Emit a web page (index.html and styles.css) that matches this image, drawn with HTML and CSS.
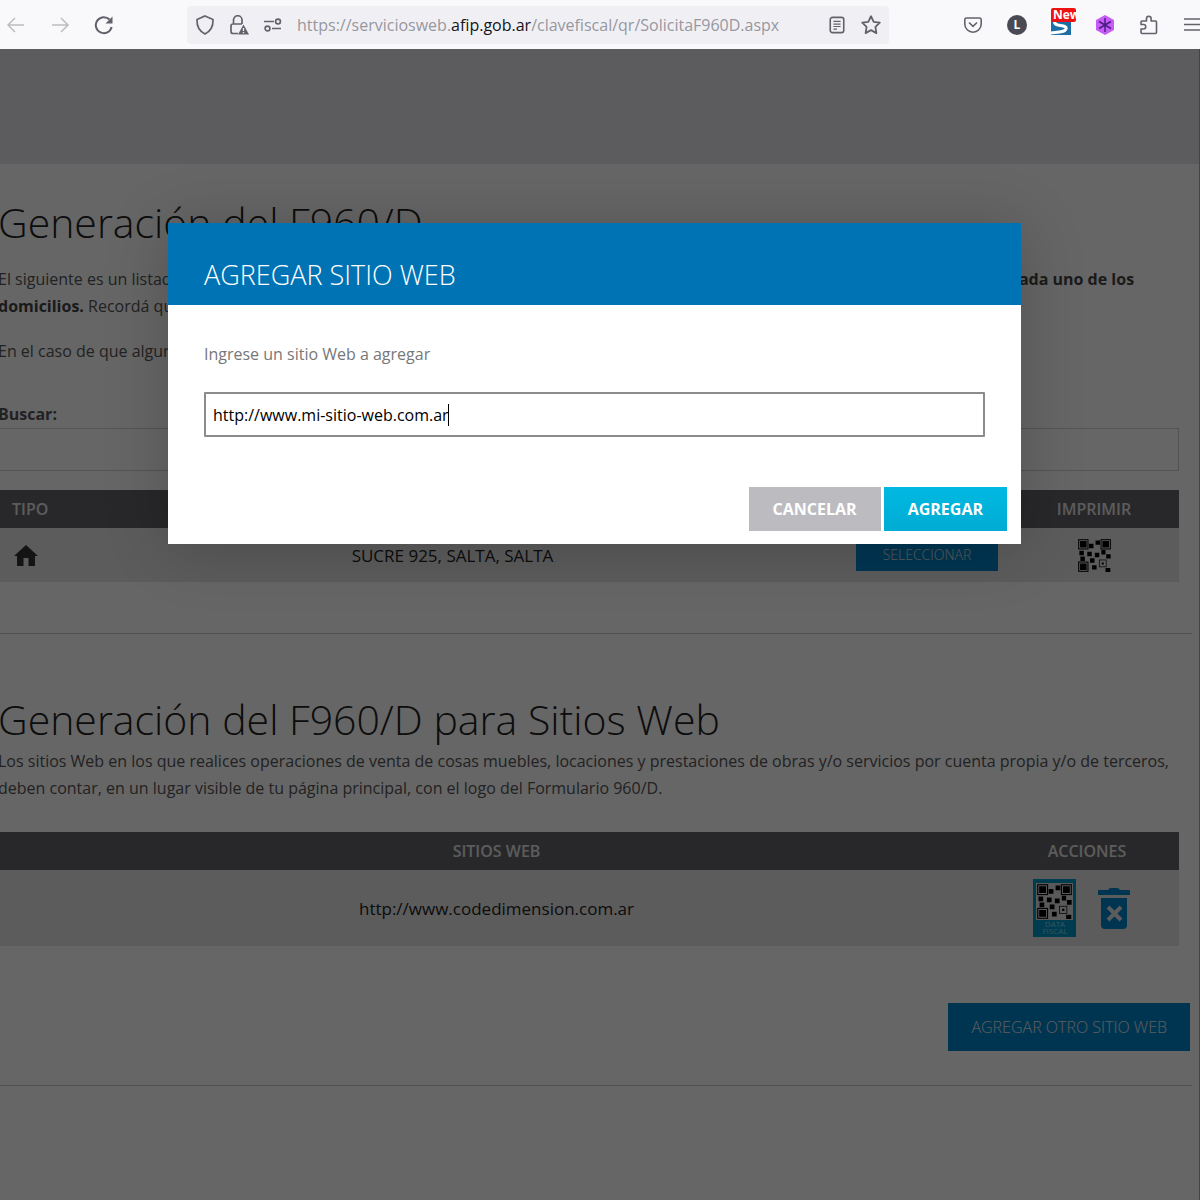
FILE: index.html
```html
<!DOCTYPE html>
<html lang="es">
<head>
<meta charset="utf-8">
<meta name="viewport" content="width=device-width, initial-scale=1">
<title>Generación del F960/D</title>
<link rel="stylesheet" href="styles.css">
</head>
<body>
<svg class="defs" aria-hidden="true">
  <symbol id="qr" viewBox="0 0 96 96">
    <g fill="none" stroke="currentColor" stroke-width="3">
      <rect x="2" y="2" width="27" height="27"/>
      <rect x="67" y="2" width="27" height="27"/>
      <rect x="2" y="67" width="27" height="27"/>
      <rect x="62" y="61" width="20" height="20" stroke-width="2"/>
    </g>
    <path fill="currentColor" d="M6 6h19v19H6zM71 6h19v19H71zM6 71h19v19H6zM69 68h6v6h-6zM32 14h13v13H32zM51 4h13v13H51zM4 34h13v13H4zM27 37h13v13H27zM49 40h13v13H49zM68 32h12v13H68zM82 44h13v13H82zM7 51h13v13H7zM35 56h13v13H35zM41 76h13v13H41zM80 84h14v12H80z"/>
  </symbol>
</svg>

<header class="toolbar">
  <nav class="nav-buttons" aria-label="Navegación">
    <button type="button" class="tool faded" aria-label="Atrás"><svg viewBox="0 0 20 20"><path d="M18 10H2M9 3l-7 7 7 7"/></svg></button>
    <button type="button" class="tool faded" aria-label="Adelante"><svg viewBox="0 0 20 20"><path d="M2 10h16M11 3l7 7-7 7"/></svg></button>
    <button type="button" class="tool" aria-label="Recargar"><svg viewBox="0 0 20 20"><path stroke-width="2" d="M17.600 12A8 8 0 1 1 15.500 4.500"/><path class="solid" d="M18.500 1.500v7h-7z"/></svg></button>
  </nav>
  <div class="address">
    <button type="button" class="tool" aria-label="Protección"><svg viewBox="0 0 20 20"><path stroke-width="1.700" d="M10 1l8 3.500C18.300 11 16 16 10 19 4 16 1.700 11 2 4.500z"/></svg></button>
    <button type="button" class="tool" aria-label="Información del sitio"><svg viewBox="0 0 20 20"><path stroke-width="1.700" d="M9 18.500H4a2 2 0 0 1-2-2V11a2 2 0 0 1 2-2h9M4.500 9V5a4 4 0 0 1 8.500 0v4"/><path class="solid" d="M14.500 9.500L20 19.500H9z"/><path stroke="#f0f0f4" stroke-width="1.300" d="M14.500 13v3M14.500 17v1.200"/></svg></button>
    <button type="button" class="tool" aria-label="Permisos"><svg viewBox="0 0 20 20"><path stroke-width="1.700" d="M1 6.500h10M9 13.500h9"/><circle cx="15" cy="6.500" r="2.400" stroke-width="1.700"/><circle cx="4.500" cy="13.500" r="2.400" stroke-width="1.700"/></svg></button>
    <span class="url">https://serviciosweb.<b>afip.gob.ar</b>/clavefiscal/qr/SolicitaF960D.aspx</span>
    <button type="button" class="tool" aria-label="Vista de lectura"><svg class="reader" viewBox="0 0 20 20"><rect x="2.500" y="1.500" width="15" height="17" rx="2.500" stroke-width="1.800"/><path stroke-width="1.300" d="M6 6h8M6 9h8M6 11.700h8M6 14.500h4"/></svg></button>
    <button type="button" class="tool" aria-label="Marcador"><svg viewBox="0 0 20 20"><path stroke-width="1.800" stroke-linejoin="round" d="M10 1.200l2.700 5.600 6.100.8-4.400 4.300 1 6.200-5.400-3-5.400 3 1-6.200L1.200 7.600l6.100-.8z"/></svg></button>
  </div>
  <div class="extensions">
    <button type="button" class="tool" aria-label="Pocket"><svg viewBox="0 0 20 20"><path stroke-width="1.600" d="M3.500 3h13A1.700 1.700 0 0 1 18.200 4.700V9a8.200 8.200 0 0 1-16.400 0V4.700A1.700 1.700 0 0 1 3.500 3zM6 7.500l4 3.800 4-3.800"/></svg></button>
    <button type="button" class="tool avatar" aria-label="Cuenta">L</button>
    <button type="button" class="tool snap" aria-label="Captura"><svg viewBox="0 0 20 20"><path fill="#1c6ea4" stroke="none" d="M0 0h20v20H0z"/><path stroke="#fff" stroke-width="3" d="M20 5H7c-5 1-4 4 0 5 5 1 9 1 8 4-1 3-7 3-15 4"/></svg><span class="badge">New</span></button>
    <button type="button" class="tool" aria-label="Extensión"><svg viewBox="0 0 20 20"><path fill="#c65cf5" stroke="none" d="M10 0l9 5v10l-9 5-9-5V5z"/><path stroke="#4b1d86" stroke-width="1.500" d="M10 3v14M4 6.500l12 7M16 6.500l-12 7"/></svg></button>
    <button type="button" class="tool" aria-label="Complementos"><svg viewBox="0 0 20 20"><path stroke-width="1.600" stroke-linejoin="round" d="M3 18.500q-1 0-1-1V14h2.500a2.200 2.200 0 0 0 0-4.500H2V7q0-1 1-1h4.500V3.500a2.300 2.300 0 0 1 4.600 0V6H16.500q1 0 1 1v10.500q0 1-1 1z"/></svg></button>
    <button type="button" class="tool" aria-label="Menú"><svg viewBox="0 0 20 20"><path stroke-width="1.600" d="M1 4h18M1 9.500h18M1 15h18"/></svg></button>
  </div>
</header>

<div class="viewport">
  <div class="banner"></div>
  <main class="page">
    <section class="block">
      <h1>Generación del F960/D</h1>
      <p class="intro">El siguiente es un listado de los domicilios que tenés registrados. Deberás imprimir el Formulario 960/D y exhibirlo siempre a la vista <b>en cada uno de los domicilios.</b> Recordá que debe estar en un lugar visible.</p>
      <p>En el caso de que alguno de los domicilios no figure, deberás actualizar tus datos.</p>
      <label for="buscar">Buscar:</label>
      <input id="buscar" class="search" type="text">
      <table class="places">
        <thead><tr><th class="kind">TIPO</th><th></th><th class="pick"></th><th class="print">IMPRIMIR</th></tr></thead>
        <tbody><tr>
          <td class="kind"><svg class="home" viewBox="0 0 24 21" role="img" aria-label="Domicilio"><path d="M12 0L0 11h3v10h6.500v-8h5v8H21V11h3z"/></svg></td>
          <td>SUCRE 925, SALTA, SALTA</td>
          <td><button type="button" class="primary small">SELECCIONAR</button></td>
          <td><button type="button" class="bare" aria-label="Imprimir"><svg class="qr"><use href="#qr"/></svg></button></td>
        </tr></tbody>
      </table>
    </section>
    <section class="block sites">
      <h2>Generación del F960/D para Sitios Web</h2>
      <p>Los sitios Web en los que realices operaciones de venta de cosas muebles, locaciones y prestaciones de obras y/o servicios por cuenta propia y/o de terceros, deben contar, en un lugar visible de tu página principal, con el logo del Formulario 960/D.</p>
      <table class="webs">
        <thead><tr><th>SITIOS WEB</th><th class="actions">ACCIONES</th></tr></thead>
        <tbody><tr>
          <td>http://www.codedimension.com.ar</td>
          <td><div class="icons">
            <button type="button" class="bare" aria-label="Data Fiscal"><svg class="fiscal" viewBox="0 0 43 58"><path fill="#0096c8" d="M0 0h43v58H0z"/><path fill="#e0e0e0" d="M3 4h37v37H3z"/><svg x="4" y="5" width="35" height="35" color="#000"><use href="#qr"/></svg><text x="22" y="48">DATA</text><text x="22" y="55">FISCAL</text></svg></button>
            <button type="button" class="bare" aria-label="Eliminar"><svg class="trash" viewBox="0 0 32 41"><path fill="#0084cc" d="M1 2h9q1-2 3-2h6q2 0 3 2h9q1 0 1 1v4H0V3q0-1 1-1zM3 10h26v27a4 4 0 0 1-4 4H7a4 4 0 0 1-4-4z"/><path stroke="#e6e6e6" stroke-width="4" d="M10 19l13 13M23 19L10 32"/></svg></button>
          </div></td>
        </tr></tbody>
      </table>
      <div class="more"><button type="button" class="primary">AGREGAR OTRO SITIO WEB</button></div>
    </section>
  </main>

  <div class="overlay">
    <form class="modal" role="dialog" aria-labelledby="modal-title">
      <h2 id="modal-title">AGREGAR SITIO WEB</h2>
      <div class="modal-body">
        <label for="sitio">Ingrese un sitio Web a agregar</label>
        <div class="field">
          <input id="sitio" type="text" value="http://www.mi-sitio-web.com.ar">
          <span class="caret"></span>
        </div>
      </div>
      <div class="modal-actions">
        <button type="button" class="cancel">CANCELAR</button>
        <button type="button" class="accept">AGREGAR</button>
      </div>
    </form>
  </div>
</div>
</body>
</html>
```
FILE: styles.css
```css
* {
  box-sizing: border-box;
}

body {
  margin: 0;
  min-height: 100vh;
  display: flex;
  flex-direction: column;
  overflow-x: hidden;
  background: #fff;
  color: #555;
  font: 16px/27px "Open Sans", "Noto Sans", sans-serif;
}

h1, h2, p {
  margin: 0;
}

button, input {
  font: inherit;
}

.defs {
  position: absolute;
  width: 0;
  height: 0;
}

/* Browser toolbar */
.toolbar {
  display: flex;
  align-items: center;
  height: 49px;
  background: #f9f9fb;
  overflow: hidden;
}

.tool {
  flex: none;
  display: flex;
  align-items: center;
  justify-content: center;
  width: 20px;
  height: 20px;
  padding: 0;
  border: 0;
  background: none;
  color: #62626b;
}

.tool svg {
  width: 20px;
  height: 20px;
  fill: none;
  stroke: currentColor;
  stroke-width: 1.5;
}

.tool .reader {
  width: 18px;
  height: 18px;
}

.tool .solid {
  fill: currentColor;
  stroke: none;
}

.faded {
  color: #bdbdc2;
}

.nav-buttons {
  display: flex;
  gap: 24px;
  width: 187px;
  padding-left: 6px;
}

.address {
  display: flex;
  align-items: center;
  gap: 14px;
  flex: 0 1 702px;
  height: 38px;
  padding: 0 8px;
  border-radius: 4px;
  background: #f0f0f4;
}

.url {
  flex: 1;
  padding-top: 2px;
  color: #97979f;
  white-space: nowrap;
}

.url b {
  color: #15141a;
  font-weight: 500;
}

.extensions {
  display: flex;
  flex: none;
  gap: 24px;
  margin-left: auto;
  margin-right: -3px;
}

.avatar {
  border-radius: 50%;
  background: #4a4a55;
  color: #fff;
  font-size: 12px;
  font-weight: 700;
}

.snap {
  position: relative;
}

.badge {
  position: absolute;
  top: -7px;
  left: 0;
  width: 25px;
  height: 14px;
  padding-left: 2px;
  overflow: hidden;
  border-radius: 2px;
  background: #ee1111;
  color: #fff;
  font-size: 12px;
  font-weight: 700;
  line-height: 13px;
}

/* Page under the dialog */
.viewport {
  position: relative;
  flex: 1;
  border-right: 1px solid #444;
  overflow: hidden;
}

.banner {
  height: 115px;
  background: #e6e6eb;
}

.page {
  margin: 0 7px 0 -2px;
}

.block {
  padding: 37px 13px 51px 0;
  border-bottom: 1px solid #ccc;
}

.sites {
  padding: 64px 13px 34px 0;
}

.page h1, .page h2 {
  color: #222;
  font-size: 41px;
  font-weight: 300;
  line-height: 42px;
}

.page h2 {
  margin-bottom: 8px;
}

.intro {
  margin: 23px 0 18px;
}

.intro b {
  color: #444;
}

.page label {
  display: block;
  margin-top: 36px;
  font-weight: 700;
}

.search {
  display: block;
  width: 100%;
  height: 43px;
  margin-bottom: 19px;
  border: 1px solid #d2d2d2;
  background: #fff;
}

table {
  width: 100%;
  border-collapse: collapse;
  table-layout: fixed;
  text-align: center;
}

th {
  height: 38px;
  padding: 0;
  background: #64646a;
  color: #e6e6e6;
  font-weight: 600;
}

td {
  height: 54px;
  padding: 0;
  background: #e6e6e6;
  color: #222;
  font-size: 17px;
}

.kind {
  width: 62px;
  padding-left: 14px;
  text-align: left;
}

.pick {
  width: 164px;
}

.print {
  width: 170px;
}

.home {
  display: block;
  width: 24px;
  height: 21px;
  margin-left: 2px;
  fill: #333;
}

.bare {
  display: inline-block;
  padding: 0;
  border: 0;
  background: none;
  color: #000;
  vertical-align: middle;
}

.bare svg {
  display: block;
}

.qr {
  width: 33px;
  height: 33px;
}

.primary {
  height: 48px;
  padding: 0 23px;
  border: 0;
  background: #0086cc;
  color: #e6e6e6;
  font-weight: 300;
  vertical-align: middle;
}

.small {
  height: 32px;
  padding: 0 27px;
  font-size: 14px;
  line-height: 32px;
}

.webs {
  margin-top: 30px;
}

.webs td {
  height: 76px;
}

.actions {
  width: 184px;
}

.icons {
  display: flex;
  align-items: center;
  justify-content: center;
  gap: 22px;
  padding-right: 12px;
}

.fiscal {
  width: 43px;
  height: 58px;
}

.fiscal text {
  fill: #7cd8f5;
  font-size: 8px;
  text-anchor: middle;
}

.trash {
  width: 32px;
  height: 41px;
}

.more {
  display: flex;
  justify-content: flex-end;
  margin: 57px -11px 0 0;
}

/* Dialog */
.overlay {
  position: absolute;
  inset: 0;
  display: flex;
  align-items: flex-start;
  justify-content: center;
  padding: 174px 10px 0 0;
  background: rgba(0, 0, 0, 0.6);
}

.modal {
  width: 92%;
  max-width: 853px;
  background: #fff;
  box-shadow: 0 4px 60px rgba(0, 0, 0, 0.2);
}

.modal h2 {
  padding: 32px 36px 10px;
  background: #0073b4;
  color: #fff;
  font-size: 27px;
  font-weight: 300;
  line-height: 40px;
}

.modal-body {
  padding: 36px 36px 50px;
}

.modal label {
  display: block;
  margin-bottom: 24px;
  color: #777;
}

.field {
  position: relative;
}

.modal input {
  display: block;
  width: 100%;
  height: 45px;
  padding: 0 7px;
  border: 2px solid #8c8c8c;
  border-radius: 1px;
  outline: 0;
  background: #fff;
  color: #000;
}

.caret {
  position: absolute;
  top: 12px;
  left: 244px;
  width: 1px;
  height: 22px;
  background: #000;
}

.modal-actions {
  display: flex;
  justify-content: flex-end;
  gap: 3px;
  padding: 0 14px 13px;
}

.modal-actions button {
  height: 44px;
  padding: 0 24px;
  border: 0;
  color: #fff;
  font-weight: 700;
}

.cancel {
  background: #bcbcc0;
}

.modal-actions .accept {
  background: linear-gradient(#00b9e2, #00acd3);
}
```
